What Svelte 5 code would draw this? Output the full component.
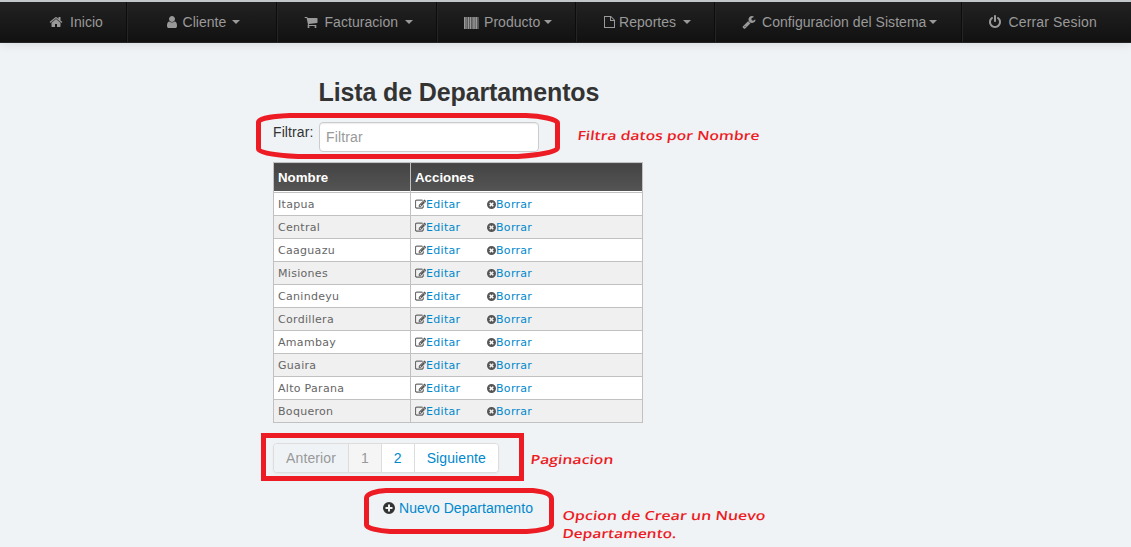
<script>
  const paths = {
    home: 'M1472 992v480q0 26-19 45t-45 19h-384v-384h-256v384h-384q-26 0-45-19t-19-45v-480q0-1 .5-3t.5-3l575-474 575 474q1 2 1 6zm223-69l-62 74q-8 9-21 11h-3q-13 0-21-7l-692-577-692 577q-12 8-24 7-13-2-21-11l-62-74q-8-10-7-23.5t11-21.5l719-599q32-26 76-26t76 26l244 204v-195q0-14 9-23t23-9h192q14 0 23 9t9 23v408l219 182q10 8 11 21.5t-7 23.5z',
    user: 'M1536 1399q0 109-62.5 187t-150.5 78h-854q-88 0-150.5-78t-62.5-187q0-85 8.5-160.5t31.5-152 58.5-131 94-89 134.5-34.5q131 128 313 128t313-128q76 0 134.5 34.5t94 89 58.5 131 31.5 152 8.5 160.5zm-256-887q0 159-112.5 271.5t-271.5 112.5-271.5-112.5-112.5-271.5 112.5-271.5 271.5-112.5 271.5 112.5 112.5 271.5z',
    cart: 'M704 1536q0 52-38 90t-90 38-90-38-38-90 38-90 90-38 90 38 38 90zm896 0q0 52-38 90t-90 38-90-38-38-90 38-90 90-38 90 38 38 90zm128-1088v512q0 24-16.5 42.5t-40.5 21.5l-1044 122q13 60 13 70 0 16-24 64h920q26 0 45 19t19 45-19 45-45 19h-1024q-26 0-45-19t-19-45q0-11 8-31.5t16-36 21.5-40 15.5-29.5l-177-823h-204q-26 0-45-19t-19-45 19-45 45-19h256q16 0 28.5 6.5t19.5 15.5 13 24.5 8 26 5.5 29.5 4.5 26h1201q26 0 45 19t19 45z',
    barcode: 'M0 256h220v1536h-220zM290 256h100v1536h-100zM450 256h220v1536h-220zM730 256h230v1536h-230zM1020 256h90v1536h-90zM1170 256h220v1536h-220zM1450 256h230v1536h-230zM1740 256h110v1536h-110z',
    file: 'M128 128h896l512 512v1024h-1408zM256 256v1280h1152v-768h-512v-512zM1024 290v350h350z',
    wrench: 'M448 1472q0-26-19-45t-45-19-45 19-19 45 19 45 45 19 45-19 19-45zm644-420l-682 682q-37 37-90 37-52 0-91-37l-106-108q-38-36-38-90 0-53 38-91l681-681q39 98 114.5 173.5t173.5 114.5zm634-435q0 39-23 106-47 134-164.5 217.5t-258.5 83.5q-185 0-316.5-131.5t-131.5-316.5 131.5-316.5 316.5-131.5q58 0 121.5 16.5t107.5 46.5q16 11 16 28t-16 28l-293 169v224l193 107q5-3 79-48.5t135.5-81 70.5-35.5q15 0 23.5 10t8.5 25z',
    power: 'M1664 896q0 156-61 298t-164 245-245 164-298 61-298-61-245-164-164-245-61-298q0-182 80.5-343t226.5-270q43-32 95.5-25t83.5 50q32 42 24.5 94.5t-49.5 84.5q-98 74-151.5 181t-53.5 228q0 104 40.5 198.5t109.5 163.5 163.5 109.5 198.5 40.5 198.5-40.5 163.5-109.5 109.5-163.5 40.5-198.5q0-121-53.5-228t-151.5-181q-42-32-49.5-84.5t24.5-94.5q31-43 84-50t95 25q146 109 226.5 270t80.5 343zm-640-768v640q0 52-38 90t-90 38-90-38-38-90v-640q0-52 38-90t90-38 90 38 38 90z',
    edit: 'M888 1184l116-116-152-152-116 116v56h96v96h56zm440-720q-16-16-33 1l-350 350q-17 17-1 33t33-1l350-350q17-17 1-33zm80 594v190q0 119-84.5 203.5t-203.5 84.5h-832q-119 0-203.5-84.5t-84.5-203.5v-832q0-119 84.5-203.5t203.5-84.5h832q63 0 117 25 15 7 18 23 3 17-9 29l-49 49q-14 14-32 8-23-6-45-6h-832q-66 0-113 47t-47 113v832q0 66 47 113t113 47h832q66 0 113-47t47-113v-126q0-13 9-22l64-64q15-15 35-7t20 29zm-96-738l288 288-672 672h-288v-288zm444 132l-92 92-288-288 92-92q28-28 68-28t68 28l152 152q28 28 28 68t-28 68z'
  };

  // width: item box; pad: space before the icon; slot: icon slot; text: label width
  const menu = [
    { label: 'Inicio', icon: 'home', width: 128, pad: 49, slot: 21, text: 33, gap: 0, caret: false },
    { label: 'Cliente', icon: 'user', width: 150, pad: 37, slot: 17.5, text: 44, gap: 5, caret: true },
    { label: 'Facturacion', icon: 'cart', width: 160, pad: 26, slot: 20.5, text: 75, gap: 5, caret: true },
    { label: 'Producto', icon: 'barcode', width: 139, pad: 26, slot: 20, text: 59, gap: 1, caret: true },
    { label: 'Reportes', icon: 'file', width: 139, pad: 26, slot: 16, text: 59, gap: 5, caret: true },
    { label: 'Configuracion del Sistema', icon: 'wrench', width: 247, pad: 26, slot: 20, text: 166, gap: 1, caret: true },
    { label: 'Cerrar Sesion', icon: 'power', width: 168, pad: 25, slot: 20.5, text: 89, gap: 0, caret: false }
  ];

  const rows = ['Itapua', 'Central', 'Caaguazu', 'Misiones', 'Canindeyu', 'Cordillera', 'Amambay', 'Guaira', 'Alto Parana', 'Boqueron'];
</script>

<nav>
  {#each menu as m}
    <a class="item" style="width:{m.width}px;padding-left:{m.pad}px">
      <span class="slot" style="width:{m.slot}px">
        {#if m.icon === 'barcode'}
          <svg width="15" height="14" viewBox="0 0 1920 1792"><path d={paths.barcode} /></svg>
        {:else}
          <svg width="14" height="14" viewBox="0 0 1792 1792"><path fill-rule="evenodd" d={paths[m.icon]} /></svg>
        {/if}
      </span>
      <span class="label" style="width:{m.text}px">{m.label}</span>
      {#if m.caret}<i class="caret" style="margin-left:{m.gap}px"></i>{/if}
    </a>
  {/each}
</nav>

<main>
  <h1>Lista de Departamentos</h1>
  <div class="filter">
    <label for="filtro">Filtrar:</label>
    <input id="filtro" type="text" placeholder="Filtrar" />
  </div>
  <table>
    <thead>
      <tr><th class="name">Nombre</th><th>Acciones</th></tr>
    </thead>
    <tbody>
      {#each rows as r}
        <tr>
          <td>{r}</td>
          <td>
            <div class="actions">
              <a class="edit"><svg width="11" height="11" viewBox="0 0 1792 1792"><path d={paths.edit} /></svg>Editar</a>
              <a><svg width="9" height="9" viewBox="0 0 18 18"><path fill-rule="evenodd" d="M9 0a9 9 0 1 0 0 18A9 9 0 0 0 9 0zM6.6 4.4 9 6.8l2.4-2.4 2.2 2.2L11.2 9l2.4 2.4-2.2 2.2L9 11.2l-2.4 2.4-2.2-2.2L6.8 9 4.4 6.6z" /></svg>Borrar</a>
            </div>
          </td>
        </tr>
      {/each}
    </tbody>
  </table>
  <div class="pager">
    <span class="off">Anterior</span><span class="current">1</span><span>2</span><span class="next">Siguiente</span>
  </div>
  <a class="new">
    <svg width="12" height="12" viewBox="0 0 12 12"><path fill-rule="evenodd" d="M6 0a6 6 0 1 0 0 12A6 6 0 0 0 6 0zM5 2.5h2V5h2.500v2H7v2.500H5V7H2.500V5H5z" /></svg>
    Nuevo Departamento
  </a>
</main>

<svg class="notes" width="1131" height="547" viewBox="0 0 1131 547">
  <g fill="none" stroke="#ed1c24" stroke-width="5">
    <path d="M290 115.500H526C540 116 557.500 119 557.500 123V148C557.500 152 538 155 518 156.500H298C278 155.500 258.500 153 258.500 149V122C258.500 118 276 116 290 115.500Z" />
    <rect x="263.500" y="435.500" width="258" height="43" />
    <path d="M386 490.500H533C543 491.500 551.500 494 551.500 499V525C551.500 528 540 531 527 531.500H390C378 531 366.500 528 366.500 525V498C366.500 494 376 491 386 490.500Z" />
  </g>
  <g class="note">
    <text transform="translate(577 140) skewX(-7)" textLength="182" lengthAdjust="spacingAndGlyphs">Filtra datos por Nombre</text>
    <text transform="translate(530 464) skewX(-7)" textLength="83" lengthAdjust="spacingAndGlyphs">Paginacion</text>
    <text transform="translate(562 520) skewX(-7)" textLength="203" lengthAdjust="spacingAndGlyphs">Opcion de Crear un Nuevo</text>
    <text transform="translate(562 538) skewX(-7)" textLength="114" lengthAdjust="spacingAndGlyphs">Departamento.</text>
  </g>
</svg>

<style>
  :global(body) { background: #eff3f6; overflow: hidden; }
  :global(#app) { font: 14px/20px "Liberation Sans", Arial, sans-serif; color: #333; }
  nav {
    display: flex;
    height: 43px;
    box-sizing: border-box;
    border-top: 2px solid #c3c6c8;
    border-bottom: 1px solid #252525;
    background: linear-gradient(#222, #111);
    box-shadow: 0 1px 10px rgba(0, 0, 0, .1);
  }
  .item {
    display: flex;
    align-items: center;
    flex: none;
    box-sizing: border-box;
    color: #999;
    white-space: nowrap;
    border-right: 1px solid #252525;
    box-shadow: inset -1px 0 #0c0c0c;
  }
  .item:last-child { border: 0; box-shadow: none; }
  .item:last-child .label { letter-spacing: .15px; }
  .slot, .label { display: flex; flex: none; }
  .label { letter-spacing: .04px; }
  svg { fill: currentColor; flex: none; }
  .caret { border: 4px solid transparent; border-top-color: #999; border-bottom: 0; }
  main { width: 370px; padding: 29px 0 0 273px; }
  h1 { margin: 0 0 10px 45.5px; font-size: 25px; line-height: 40px; letter-spacing: -.12px; white-space: nowrap; }
  .filter { display: flex; height: 40px; }
  label { width: 46px; letter-spacing: .1px; }
  input {
    width: 220px;
    height: 30px;
    box-sizing: border-box;
    padding: 0 6px;
    border: 1px solid #ccc;
    border-radius: 4px;
    background: #fff;
    font: inherit;
    letter-spacing: .15px;
    box-shadow: inset 0 1px 1px rgba(0, 0, 0, .075);
  }
  input::placeholder { color: #999; opacity: 1; }
  table { width: 370px; border-collapse: collapse; table-layout: fixed; font: 11px/14px "DejaVu Sans", Verdana, sans-serif; letter-spacing: .3px; color: #666; }
  th, td { border: 1px solid #c1c1c1; padding: 0 4px; text-align: left; }
  th { height: 29px; font: bold 13.3px/20px "Liberation Sans", Arial, sans-serif; letter-spacing: 0; color: #fff; background: linear-gradient(#444, #555); box-shadow: inset 0 -1px #fff; }
  th.name { width: 128px; }
  td { height: 20px; padding-top: 2px; background: #fff; }
  tr:nth-child(even) td { background: #f0f0f0; }
  .actions { display: flex; }
  .actions a { display: flex; align-items: center; color: #08c; }
  .actions svg { color: #555; margin-bottom: 2px; }
  .edit svg { stroke: #555; stroke-width: 50; }
  .edit { width: 72px; }
  .pager { display: flex; width: max-content; margin-top: 20px; box-sizing: border-box; height: 30px; border: 1px solid #ddd; border-radius: 4px; box-shadow: 0 1px 2px rgba(0, 0, 0, .05); overflow: hidden; }
  .pager span { padding: 4px 12px; background: #fff; color: #08c; border-left: 1px solid #ddd; }
  .pager .off { background: #eff3f6; border: 0; color: #999; letter-spacing: .13px; }
  .pager .current { background: #f5f5f5; color: #999; }
  .pager .next { letter-spacing: .1px; }
  .new { display: flex; align-items: center; gap: 4px; margin: 25px 0 0 110px; color: #08c; letter-spacing: .05px; white-space: nowrap; }
  .new svg { color: #333; }
  .notes { position: absolute; left: 0; top: 0; pointer-events: none; }
  .note { fill: #ed1c24; font: 600 12.5px "Open Sans", sans-serif; }
</style>
